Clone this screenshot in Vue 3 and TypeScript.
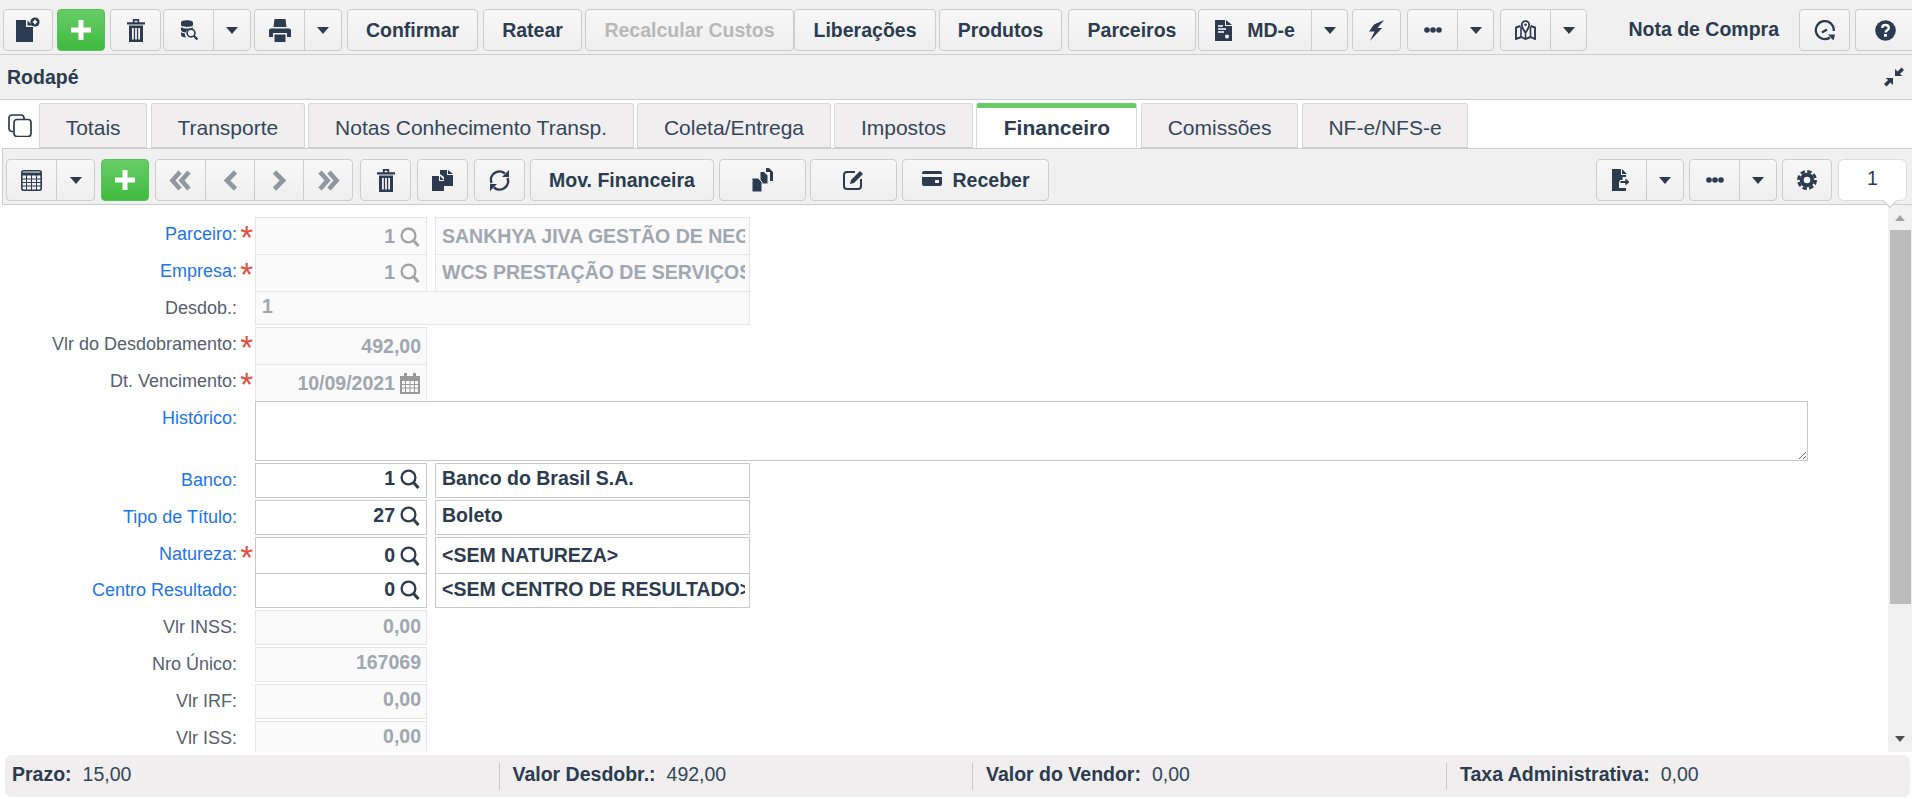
<script setup lang="ts">
interface Field {
  label: string
  link?: boolean
  required?: boolean
  code?: string
  desc?: string
  value?: string
  date?: boolean
  wide?: boolean
  active?: boolean
}

const upperFields: Field[] = [
  { label: 'Parceiro:', link: true, required: true, code: '1', desc: 'SANKHYA JIVA GESTÃO DE NEGÓCIOS LTDA' },
  { label: 'Empresa:', link: true, required: true, code: '1', desc: 'WCS PRESTAÇÃO DE SERVIÇOS LTDA' },
  { label: 'Desdob.:', value: '1', wide: true },
  { label: 'Vlr do Desdobramento:', required: true, value: '492,00' },
  { label: 'Dt. Vencimento:', required: true, value: '10/09/2021', date: true },
]

const lowerFields: Field[] = [
  { label: 'Banco:', link: true, code: '1', desc: 'Banco do Brasil S.A.', active: true },
  { label: 'Tipo de Título:', link: true, code: '27', desc: 'Boleto', active: true },
  { label: 'Natureza:', link: true, required: true, code: '0', desc: '<SEM NATUREZA>', active: true },
  { label: 'Centro Resultado:', link: true, code: '0', desc: '<SEM CENTRO DE RESULTADO>', active: true },
  { label: 'Vlr INSS:', value: '0,00' },
  { label: 'Nro Único:', value: '167069' },
  { label: 'Vlr IRF:', value: '0,00' },
  { label: 'Vlr ISS:', value: '0,00' },
]

const tabs = ['Totais', 'Transporte', 'Notas Conhecimento Transp.', 'Coleta/Entrega', 'Impostos', 'Financeiro', 'Comissões', 'NF-e/NFS-e']
const totals = [
  { label: 'Prazo:', value: '15,00' },
  { label: 'Valor Desdobr.:', value: '492,00' },
  { label: 'Valor do Vendor:', value: '0,00' },
  { label: 'Taxa Administrativa:', value: '0,00' },
]
</script>

<template>
  <div class="app">
    <svg class="sprite" aria-hidden="true">
      <symbol id="i-docadd" viewBox="0 0 24 25"><path d="M0 3h10v7h7v15H0z" fill="currentColor"/><path d="M11.500 3.500l5 5h-5z" fill="currentColor"/><circle cx="19" cy="5" r="4.600" fill="currentColor"/><path d="M19 2.800v4.400M16.800 5h4.400" stroke="#fff" stroke-width="1.600"/></symbol>
      <symbol id="i-plus" viewBox="0 0 24 24"><path d="M12 2v20M2 12h20" stroke="currentColor" stroke-width="5" fill="none"/></symbol>
      <symbol id="i-trash" viewBox="0 0 18 23"><path d="M0 3.200h18v2.300H0zM5.800 0h6.400v3.500h-1.800V1.700H7.600v1.800H5.800z" fill="currentColor"/><path d="M2 6.500h14V23H2zM5 9v11.500h1.800V9zM8.100 9v11.500h1.800V9zM11.200 9v11.500H13V9z" fill="currentColor" fill-rule="evenodd"/></symbol>
      <symbol id="i-dbsearch" viewBox="0 0 18 20"><path d="M1 2.500C1-.5 13-.5 13 2.500V5C13 7.500 1 7.500 1 5zM1 7.300c3 1.700 9 1.700 12 0V8.500c-3.500-.5-6.500 1.300-7.400 3.900C3.300 12.200 1 11.400 1 10zM1 12.300c1 .7 2.300 1 3.900 1.200-.1 1.400.2 2.900 1.100 4.100C3.200 17.500 1 16.500 1 15z" fill="currentColor"/><circle cx="11" cy="13" r="3.900" fill="none" stroke="currentColor" stroke-width="1.600"/><path d="M13.800 15.800l3.600 3.700" stroke="currentColor" stroke-width="2.200"/></symbol>
      <symbol id="i-print" viewBox="0 0 22 23"><path d="M5.500 0h11l1 8h-13z" fill="currentColor"/><path d="M2 9.500h18a2 2 0 0 1 2 2V18h-4v-4H4v4H0v-6.500a2 2 0 0 1 2-2z" fill="currentColor"/><path d="M5.500 15.500h11V23h-11z" fill="currentColor"/></symbol>
      <symbol id="i-doclines" viewBox="0 0 17 21"><path d="M0 0h10v6h7v15H0z" fill="currentColor"/><path d="M11 0l6 5h-6z" fill="currentColor"/><path d="M3 6h5M3 9h8M3 12h6" stroke="#fff" stroke-width="1.300"/><circle cx="12" cy="16.500" r="2" fill="#fff"/></symbol>
      <symbol id="i-bolt" viewBox="0 0 15 21"><path d="M15 0L8.500 8H13L1 21l4.500-9.500H0L5 4.500z" fill="currentColor"/></symbol>
      <symbol id="i-dots" viewBox="0 0 18 6"><circle cx="3" cy="3" r="2.800" fill="currentColor"/><circle cx="9" cy="3" r="2.800" fill="currentColor"/><circle cx="15" cy="3" r="2.800" fill="currentColor"/></symbol>
      <symbol id="i-map" viewBox="0 0 21 20"><path d="M5.500 6L1 7.500V19l5-2 4.500 2 5-2 4.500 2V7.500L15.500 6" fill="none" stroke="currentColor" stroke-width="1.900"/><path d="M6 7v10M10.500 14v5M15.500 7v10" stroke="currentColor" stroke-width="1.600"/><path d="M10.500 13C8.500 9.500 6.800 8 6.800 4.800a3.700 3.700 0 0 1 7.400 0c0 3.200-1.700 4.700-3.700 8.200z" fill="#f4f4f4" stroke="currentColor" stroke-width="1.800"/><circle cx="10.500" cy="4.800" r="1.300" fill="currentColor"/></symbol>
      <symbol id="i-clock" viewBox="0 0 21 21"><path d="M16 17.500A9 9 0 1 1 19.800 11" fill="none" stroke="currentColor" stroke-width="2.300"/><path d="M14 14.500h7l-1.500 6z" fill="currentColor"/><path d="M8 12.500l5-3" stroke="currentColor" stroke-width="2.200"/></symbol>
      <symbol id="i-help" viewBox="0 0 21 21"><circle cx="10.500" cy="10.500" r="10.300" fill="currentColor"/><path d="M7.200 8c0-2 1.500-3 3.300-3s3.300 1 3.300 2.900c0 2.300-3.200 2.300-3.200 4.600" fill="none" stroke="#fff" stroke-width="2.300"/><rect x="9" y="14" width="2.900" height="2.700" fill="#fff"/></symbol>
      <symbol id="i-shrink" viewBox="0 0 20 20"><path d="M11 9V2l2.600 2.600L17.500.5 20 3l-4.100 4 2.600 2z" fill="currentColor"/><path d="M9 11v7l-2.600-2.600-3.900 4.100L0 17l4.100-4-2.600-2z" fill="currentColor"/></symbol>
      <symbol id="i-tabcopy" viewBox="0 0 24 23"><path d="M5 17.500H4a3 3 0 0 1-3-3V4a3 3 0 0 1 3-3h9a3 3 0 0 1 3 3v1" fill="none" stroke="currentColor" stroke-width="1.700"/><rect x="6" y="5.500" width="17" height="17" rx="3" fill="none" stroke="currentColor" stroke-width="1.700"/></symbol>
      <symbol id="i-table" viewBox="0 0 21 21"><rect x=".8" y=".8" width="19.400" height="19.400" rx="2" fill="none" stroke="currentColor" stroke-width="1.600"/><path d="M1 2.500h19v3H1z" fill="currentColor"/><path d="M1 9h19M1 12.500h19M1 16h19M5.500 5v15M10.500 5v15M15.500 5v15" stroke="currentColor" stroke-width="1"/></symbol>
      <symbol id="i-dleft" viewBox="0 0 23 21"><path d="M11 2L3.500 10.500 11 19M20 2l-7.500 8.500L20 19" fill="none" stroke="currentColor" stroke-width="4.600"/></symbol>
      <symbol id="i-dright" viewBox="0 0 23 21"><path d="M3 2l7.500 8.500L3 19M12 2l7.500 8.500L12 19" fill="none" stroke="currentColor" stroke-width="4.600"/></symbol>
      <symbol id="i-left" viewBox="0 0 15 21"><path d="M12.500 2L4 10.500 12.500 19" fill="none" stroke="currentColor" stroke-width="4.600"/></symbol>
      <symbol id="i-right" viewBox="0 0 15 21"><path d="M2.500 2L11 10.500 2.500 19" fill="none" stroke="currentColor" stroke-width="4.600"/></symbol>
      <symbol id="i-copy" viewBox="0 0 21 21"><path d="M8 0h7l0 5h6v11H12V7l-4-3z" fill="currentColor"/><path d="M16 0l5 4h-5z" fill="currentColor"/><path d="M0 6h7v5h5v10H0z" fill="currentColor"/><path d="M8 6l4 4H8z" fill="currentColor"/></symbol>
      <symbol id="i-refresh" viewBox="0 0 21 23"><path d="M2.500 14A8.500 8.500 0 0 1 16 4.500M18.500 9A8.500 8.500 0 0 1 5 18.500" fill="none" stroke="currentColor" stroke-width="2.400"/><path d="M13 8h7V1zM8 15H1v7z" fill="currentColor"/></symbol>
      <symbol id="i-copies" viewBox="0 0 21 24"><path d="M14 0h3l4 4v9h-3V4h-4z" fill="currentColor"/><path d="M8 3.500h4l4 4V16H8z" fill="currentColor" stroke="#f4f4f4"/><path d="M0 10h6l4 4v10H0z" fill="currentColor" stroke="#f4f4f4"/></symbol>
      <symbol id="i-edit" viewBox="0 0 21 20"><path d="M12 2H4a3 3 0 0 0-3 3v11a3 3 0 0 0 3 3h11a3 3 0 0 0 3-3V9" fill="none" stroke="currentColor" stroke-width="2"/><path d="M7 14l1-4L17 1l3 3-9 9z" fill="currentColor"/></symbol>
      <symbol id="i-card" viewBox="0 0 20 15"><path d="M2 0h16a2 2 0 0 1 2 2v1H0V2a2 2 0 0 1 2-2zM0 6h20v7a2 2 0 0 1-2 2H2a2 2 0 0 1-2-2zM13 9v3h4V9z" fill="currentColor" fill-rule="evenodd"/></symbol>
      <symbol id="i-export" viewBox="0 0 19 22"><path d="M0 0h9v6h5v2h-3.500v5H7v6h7v3H0z" fill="currentColor"/><path d="M10 0l5 5h-5z" fill="currentColor"/><path d="M8 11.500h5V8.500l5 4.500-5 4.500v-3H8z" fill="currentColor" stroke="#f4f4f4" stroke-width="1"/></symbol>
      <symbol id="i-gear" viewBox="0 0 20 20"><circle cx="10" cy="10" r="7.300" fill="currentColor"/><circle cx="10" cy="10" r="8.600" fill="none" stroke="currentColor" stroke-width="2.800" stroke-dasharray="4.400 2.350"/><circle cx="10" cy="10" r="3.300" fill="#f4f4f4"/></symbol>
      <symbol id="i-search" viewBox="0 0 20 20"><circle cx="8.500" cy="8.500" r="6.900" fill="none" stroke="currentColor" stroke-width="2.300"/><path d="M13.500 13.500l5 5.500" stroke="currentColor" stroke-width="3"/></symbol>
      <symbol id="i-cal" viewBox="0 0 20 21"><path d="M0 3h20v18H0zM2 8v11h16V8z" fill="currentColor" fill-rule="evenodd"/><path d="M4 0h3v4H4zM13 0h3v4h-3z" fill="currentColor"/><path d="M2 11.500h16M2 15h16M5.500 8v11M10 8v11M14.500 8v11" stroke="currentColor" stroke-width="1"/></symbol>
    </svg>

    <header class="topbar">
      <button class="btn t-new"><svg class="ic-docadd"><use href="#i-docadd" /></svg></button>
      <button class="btn green t-add"><svg class="ic-plus"><use href="#i-plus" /></svg></button>
      <button class="btn t-trash"><svg class="ic-trash"><use href="#i-trash" /></svg></button>
      <div class="split t-db">
        <button class="seg"><svg class="ic-db"><use href="#i-dbsearch" /></svg></button>
        <button class="seg caret-seg"><i class="caret"></i></button>
      </div>
      <div class="split t-print">
        <button class="seg"><svg class="ic-print"><use href="#i-print" /></svg></button>
        <button class="seg caret-seg"><i class="caret"></i></button>
      </div>
      <button class="btn t-confirm">Confirmar</button>
      <button class="btn t-ratear">Ratear</button>
      <button class="btn off t-recalc">Recalcular Custos</button>
      <button class="btn t-liber">Liberações</button>
      <button class="btn t-prod">Produtos</button>
      <button class="btn t-parc">Parceiros</button>
      <div class="split t-mde">
        <button class="seg mde-seg"><svg class="ic-doclines"><use href="#i-doclines" /></svg>MD-e</button>
        <button class="seg caret-seg"><i class="caret"></i></button>
      </div>
      <button class="btn t-bolt"><svg class="ic-bolt"><use href="#i-bolt" /></svg></button>
      <div class="split t-more">
        <button class="seg"><svg class="ic-dots"><use href="#i-dots" /></svg></button>
        <button class="seg caret-seg"><i class="caret"></i></button>
      </div>
      <div class="split t-map">
        <button class="seg"><svg class="ic-map"><use href="#i-map" /></svg></button>
        <button class="seg caret-seg"><i class="caret"></i></button>
      </div>
      <div class="page-title">Nota de Compra</div>
      <button class="btn t-clock"><svg class="ic-clock"><use href="#i-clock" /></svg></button>
      <button class="btn t-help"><svg class="ic-help"><use href="#i-help" /></svg></button>
    </header>

    <div class="titlebar">
      <strong>Rodapé</strong>
      <svg class="ic-shrink"><use href="#i-shrink" /></svg>
    </div>

    <nav class="tabs">
      <svg class="ic-tabcopy"><use href="#i-tabcopy" /></svg>
      <div v-for="t in tabs" :key="t" class="tab" :class="{ current: t === 'Financeiro' }">{{ t }}</div>
    </nav>

    <div class="toolbar">
      <div class="split b-table">
        <button class="seg"><svg class="ic-table"><use href="#i-table" /></svg></button>
        <button class="seg caret-seg"><i class="caret"></i></button>
      </div>
      <button class="btn green b-add"><svg class="ic-plus"><use href="#i-plus" /></svg></button>
      <div class="split b-nav">
        <button class="seg nav"><svg class="ic-dbl"><use href="#i-dleft" /></svg></button>
        <button class="seg nav"><svg class="ic-sgl"><use href="#i-left" /></svg></button>
        <button class="seg nav"><svg class="ic-sgl"><use href="#i-right" /></svg></button>
        <button class="seg nav"><svg class="ic-dbl"><use href="#i-dright" /></svg></button>
      </div>
      <button class="btn b-trash"><svg class="ic-trash"><use href="#i-trash" /></svg></button>
      <button class="btn b-copy"><svg class="ic-copy"><use href="#i-copy" /></svg></button>
      <button class="btn b-refresh"><svg class="ic-refresh"><use href="#i-refresh" /></svg></button>
      <button class="btn b-mov">Mov. Financeira</button>
      <button class="btn b-i1"><svg class="ic-copies"><use href="#i-copies" /></svg></button>
      <button class="btn b-i2"><svg class="ic-edit"><use href="#i-edit" /></svg></button>
      <button class="btn b-rec"><svg class="ic-card"><use href="#i-card" /></svg>Receber</button>

      <div class="split b-export">
        <button class="seg"><svg class="ic-export"><use href="#i-export" /></svg></button>
        <button class="seg caret-seg"><i class="caret"></i></button>
      </div>
      <div class="split b-more">
        <button class="seg"><svg class="ic-dots"><use href="#i-dots" /></svg></button>
        <button class="seg caret-seg"><i class="caret"></i></button>
      </div>
      <button class="btn b-gear"><svg class="ic-gear"><use href="#i-gear" /></svg></button>
      <div class="pager">1</div>
    </div>

    <main class="body">
      <form class="form" @submit.prevent>
        <div v-for="f in upperFields" :key="f.label" class="row">
          <label :class="{ link: f.link }">{{ f.label }}</label>
          <span class="star">{{ f.required ? '*' : '' }}</span>
          <template v-if="f.code">
            <div class="field num"><span class="val">{{ f.code }}</span><svg class="ic-search"><use href="#i-search" /></svg></div>
            <div class="field desc"><span class="clip">{{ f.desc }}</span></div>
          </template>
          <div v-else-if="f.wide" class="field wide"><span class="val">{{ f.value }}</span></div>
          <div v-else-if="f.date" class="field num"><span class="val">{{ f.value }}</span><svg class="ic-cal"><use href="#i-cal" /></svg></div>
          <div v-else class="field num plain"><span class="val">{{ f.value }}</span></div>
        </div>

        <div class="row note-row">
          <label class="link note-label">Histórico:</label>
          <span class="star"></span>
          <textarea class="note"></textarea>
        </div>

        <div v-for="f in lowerFields" :key="f.label" class="row" :class="{ on: f.active }">
          <label :class="{ link: f.link }">{{ f.label }}</label>
          <span class="star">{{ f.required ? '*' : '' }}</span>
          <template v-if="f.code">
            <div class="field num"><span class="val">{{ f.code }}</span><svg class="ic-search"><use href="#i-search" /></svg></div>
            <div class="field desc"><span class="clip">{{ f.desc }}</span></div>
          </template>
          <div v-else class="field num plain"><span class="val">{{ f.value }}</span></div>
        </div>
      </form>
      <div class="scrollbar">
        <i class="arrow up"></i>
        <div class="thumb"></div>
        <i class="arrow down"></i>
      </div>
    </main>

    <footer class="totals">
      <div v-for="t in totals" :key="t.label" class="total"><b>{{ t.label }}</b><span>{{ t.value }}</span></div>
    </footer>
  </div>
</template>

<style>
html, body { margin: 0; background: #fff; overflow: hidden; }
</style>

<style scoped>
.app {
  width: 1912px;
  height: 799px;
  overflow: hidden;
  display: flex;
  flex-direction: column;
  background: #fff;
  color: #2c3b4f;
  font-family: "Liberation Sans", Arial, sans-serif;
}
.sprite { position: absolute; width: 0; height: 0; }
svg { display: block; flex: none; }
button { font: inherit; color: inherit; padding: 0; margin: 0; outline: 0; }

/* buttons */
.btn, .split {
  box-sizing: border-box;
  height: 42px;
  flex: none;
  border: 1px solid #cdcdcd;
  border-radius: 4px;
  background: linear-gradient(#f7f7f7, #efefef);
}
.btn {
  display: flex;
  align-items: center;
  justify-content: center;
  font-size: 19.5px;
  font-weight: 700;
  white-space: nowrap;
}
.btn.green { background: linear-gradient(#68cd68, #3fba3f); border-color: #58c058; color: #fff; }
.btn.off { color: #b8b8b8; }
.split { display: flex; }
.seg {
  border: 0;
  background: transparent;
  flex: none;
  width: 49px;
  height: 100%;
  display: flex;
  align-items: center;
  justify-content: center;
}
.seg + .seg { border-left: 1px solid #cdcdcd; }
.caret-seg { flex: 1; width: auto; }
.caret { display: block; width: 0; height: 0; border: 6px solid transparent; border-top: 7px solid #2c3b4f; border-bottom: 0; }
.nav { color: #8f97a1; width: 49px; }

/* top bar */
.topbar { flex: none; box-sizing: border-box; height: 55px; padding-top: 9px; display: flex; border-bottom: 1px solid #cdcdcd; background: #f0f0f0; }
.t-new { width: 50px; margin-left: 3px; }
.t-add { width: 48px; margin-left: 4px; }
.t-trash { width: 51px; margin-left: 5px; }
.t-db { width: 88px; margin-left: 2px; }
.t-print { width: 88px; margin-left: 3px; }
.t-confirm { width: 131px; margin-left: 5px; }
.t-ratear { width: 99px; margin-left: 5px; }
.t-recalc { width: 209px; margin-left: 3px; }
.t-liber { width: 142px; }
.t-prod { width: 123px; margin-left: 3px; }
.t-parc { width: 128px; margin-left: 6px; }
.t-mde { width: 150px; margin-left: 2px; }
.t-mde .mde-seg { width: 112px; font-size: 19.5px; font-weight: 700; gap: 15px; }
.t-bolt { width: 49px; margin-left: 4px; }
.t-more { width: 87px; margin-left: 6px; }
.t-map { width: 87px; margin-left: 6px; }
.page-title { margin-left: auto; margin-right: 20px; font-size: 19.5px; font-weight: 700; line-height: 40px; white-space: nowrap; }
.t-clock { width: 51px; }
.t-help { width: 60px; margin-left: 5px; margin-right: -3px; border-right: 0; }

/* title bar */
.titlebar {
  flex: none;
  box-sizing: border-box;
  height: 45px;
  padding: 0 8px 0 7px;
  display: flex;
  align-items: center;
  justify-content: space-between;
  border-bottom: 1px solid #cdcdcd;
  background: #f0f0f0;
  font-size: 19.5px;
}

/* tabs */
.tabs { flex: none; box-sizing: border-box; height: 48px; padding-top: 3px; display: flex; gap: 3.5px; background: #fff; }
.tab {
  box-sizing: border-box;
  height: 45px;
  padding: 4px 25.7px 0;
  display: flex;
  align-items: center;
  border: 1px solid #d8d8d8;
  border-bottom: 1px solid #cdcdcd;
  border-radius: 3px 3px 0 0;
  background: #f0eeee;
  font-size: 21px;
  white-space: nowrap;
  color: #35465a;
}
.tab.current { background: #fff; border-top: 5px solid #66cc66; border-bottom-color: #fff; font-weight: 700; padding: 0 26.5px; color: #2c3b4f; }

/* toolbar */
.toolbar {
  flex: none;
  box-sizing: border-box;
  height: 57px;
  margin-left: 2px;
  padding-top: 10px;
  display: flex;
  border: 1px solid #cdcdcd;
  border-right: 0;
  background: #f0f0f0;
}
.b-table { width: 89px; margin-left: 3px; }
.b-add { width: 48px; margin-left: 6px; }
.b-nav { width: 198px; margin-left: 6px; }
.b-trash { width: 51px; margin-left: 7px; }
.b-copy { width: 51px; margin-left: 6px; }
.b-refresh { width: 51px; margin-left: 6px; }
.b-mov { width: 184px; margin-left: 5px; }
.b-i1 { width: 87px; margin-left: 5px; }
.b-i2 { width: 87px; margin-left: 4px; }
.b-rec { width: 147px; margin-left: 5px; gap: 11px; }
.b-rec svg { margin-bottom: 3px; }
.b-export { width: 88px; margin-left: auto; }
.b-more { width: 88px; margin-left: 5px; }
.b-gear { width: 50px; margin-left: 5px; }
.pager {
  position: relative;
  box-sizing: border-box;
  width: 69px;
  height: 42px;
  margin: 0 5px 0 6px;
  flex: none;
  border: 1px solid #dcdcdc;
  border-radius: 6px;
  background: #fff;
  font-size: 19.5px;
  line-height: 36px;
  text-align: center;
}
.pager::after {
  content: "";
  position: absolute;
  left: 46px;
  bottom: -6px;
  width: 9px;
  height: 9px;
  background: #fff;
  border-right: 1px solid #cdcdcd;
  border-bottom: 1px solid #cdcdcd;
  transform: rotate(45deg);
}

/* form */
.body { flex: none; height: 547px; display: flex; background: #fff; }
.form { flex: 1; min-width: 0; overflow: hidden; padding-top: 12px; box-sizing: border-box; }
.row {
  display: grid;
  grid-template-columns: 237px 18px 172px 8px 315px;
  height: 34.8px;
  margin-bottom: 2px;
  --b: #e6e6e6;
  --bg: #fafafa;
  --fg: #a1a7b0;
  --ic: #a3a3a3;
}
.row.on { --b: #c9c9c9; --bg: #fff; --fg: #2c3b4f; --ic: #2c3b4f; }
label { font-size: 18px; line-height: 34px; text-align: right; color: #556070; white-space: nowrap; }
label.link { color: #1c74ee; }
.star { color: #e74c3c; font-size: 33px; line-height: 41px; text-align: right; padding-right: 2px; }
.field {
  box-sizing: border-box;
  min-width: 0;
  height: 100%;
  display: flex;
  align-items: center;
  border: 1px solid var(--b);
  background: var(--bg);
  color: var(--fg);
  font-size: 19.5px;
  font-weight: 700;
  white-space: nowrap;
}
.val { padding-bottom: 3px; }
.num { justify-content: flex-end; padding-right: 6px; gap: 5px; }
.num svg { margin-bottom: 2px; }
.plain { padding-right: 5px; }
.desc { grid-column: 5; padding: 0 4px 0 6px; }
.clip { display: block; overflow: hidden; padding-bottom: 3px; }
.wide { grid-column: 3 / 6; padding-left: 6px; }
.ic-search { width: 20px; height: 20px; color: var(--ic); }
.ic-cal { width: 20px; height: 21px; color: #999; }
.note-row { height: 60px; }
.note-label { line-height: 34px; }
.note {
  grid-column: 3 / 6;
  box-sizing: border-box;
  width: 1553px;
  height: 60px;
  margin: 0;
  border: 1px solid #c9c9c9;
  background: #fff;
  outline: 0;
}

/* scrollbar */
.scrollbar { flex: none; box-sizing: border-box; width: 24px; background: #f1f1f1; display: flex; flex-direction: column; align-items: center; }
.arrow { display: block; width: 0; height: 0; border: 5.5px solid transparent; }
.arrow.up { margin-top: 10px; border-top: 0; border-bottom: 6px solid #a3a3a3; }
.arrow.down { margin-top: auto; margin-bottom: 10px; border-bottom: 0; border-top: 6px solid #505050; }
.thumb { width: 21px; height: 374px; margin-top: 9px; margin-left: 1px; background: #bcbcbc; }

/* totals */
.totals {
  flex: none;
  box-sizing: border-box;
  height: 42px;
  margin: 3px 2px 0 5px;
  display: grid;
  grid-template-columns: 493.5px 473.5px 474px 1fr;
  align-items: center;
  border-radius: 7px;
  background: #f0eeee;
  font-size: 19.5px;
  white-space: nowrap;
}
.total { display: flex; gap: 11px; padding: 0 0 3px 7px; box-sizing: border-box; height: 27px; align-items: center; }
.total + .total { border-left: 1px solid #c4c7cb; padding-left: 13px; }
.total b { font-weight: 700; }
.total span { color: #35465a; }

/* icon sizes */
.ic-docadd { width: 24px; height: 25px; margin-top: -1px; }
.ic-plus { width: 24px; height: 24px; }
.ic-trash { width: 18px; height: 23px; }
.ic-db { width: 18px; height: 20px; }
.ic-print { width: 22px; height: 23px; }
.ic-doclines { width: 17px; height: 21px; }
.ic-bolt { width: 15px; height: 21px; }
.ic-dots { width: 18px; height: 6px; }
.ic-map { width: 21px; height: 20px; }
.ic-clock { width: 21px; height: 21px; }
.ic-help { width: 21px; height: 21px; }
.ic-shrink { width: 20px; height: 20px; }
.ic-tabcopy { width: 24px; height: 23px; margin: 11px 3.5px 0 8px; }
.ic-table { width: 21px; height: 21px; }
.ic-dbl { width: 23px; height: 21px; }
.ic-sgl { width: 15px; height: 21px; }
.ic-copy { width: 21px; height: 21px; }
.ic-refresh { width: 21px; height: 23px; }
.ic-copies { width: 21px; height: 24px; }
.ic-edit { width: 21px; height: 20px; }
.ic-card { width: 20px; height: 15px; }
.ic-export { width: 19px; height: 22px; }
.ic-gear { width: 20px; height: 20px; }
</style>
